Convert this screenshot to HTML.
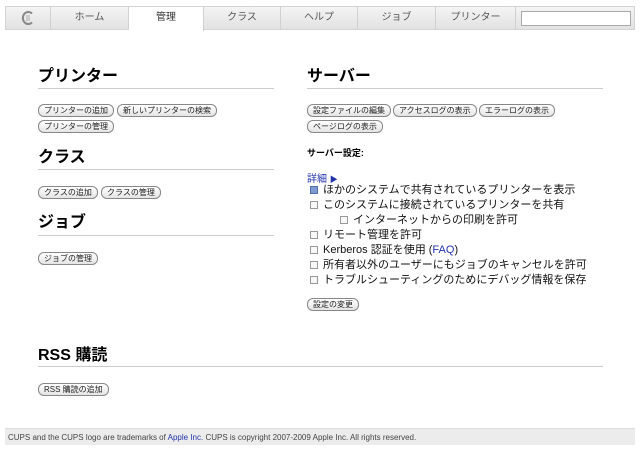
<!DOCTYPE html>
<html><head><meta charset="utf-8"><style>
*{margin:0;padding:0;box-sizing:border-box}
body{width:640px;height:451px;background:#fff;font-family:"Liberation Sans","Noto Sans CJK JP",sans-serif;position:relative;overflow:hidden;color:#000}
.nav{position:absolute;left:5px;top:6px;width:630px;height:24px;background:linear-gradient(#f4f4f4,#e2e2e2);border:1px solid #d4d4d4}
.tab{position:absolute;top:0;height:22px;border-right:1px solid #d0d0d0;font-size:10px;color:#555;text-align:center;line-height:22px}
.tab.on{background:#fff;color:#333;height:24px}
.srch{position:absolute;left:515px;top:4px;width:110px;height:15px;background:#fff;border:1px solid #aaa}
.abs{position:absolute}
h2{position:absolute;font-size:16px;font-weight:bold;line-height:18px}
.ln{position:absolute;height:1px;background:#ccc}
.b{position:absolute;height:13px;border:1px solid #888;border-radius:6px;background:linear-gradient(#fff,#e4e4e4);font-size:8px;line-height:11px;padding:0 5px;white-space:nowrap;color:#222}
.cb{position:absolute;font-size:11px;line-height:13px;white-space:nowrap;color:#111}
.cb i{display:inline-block;width:8px;height:8px;border:1px solid #999;background:#f8f8f8;margin-right:5px;vertical-align:-1px;position:relative}
.cb i.ck{background:#7f9ad0;border-color:#5570aa}
.foot{position:absolute;left:5px;top:428px;width:630px;height:17px;background:#ececec;border-top:1px solid #ddd;font-size:8px;color:#444;line-height:17px;padding-left:3px}
a{color:#2233aa;text-decoration:none}
</style></head><body>
<div class="nav">
<div class="tab" style="left:0;width:45px">
<svg width="14" height="16" viewBox="0 0 14 16" style="margin-top:3px"><path d="M11 3.5A5.5 6 0 1 0 11 12.5" fill="none" stroke="#888" stroke-width="2"/><path d="M5 6h4M5 8h4M5 10h4" stroke="#aaa" stroke-width="1"/></svg>
</div>
<div class="tab" style="left:45px;width:78px">ホーム</div>
<div class="tab on" style="left:123px;width:75px">管理</div>
<div class="tab" style="left:198px;width:77px">クラス</div>
<div class="tab" style="left:275px;width:77px">ヘルプ</div>
<div class="tab" style="left:352px;width:78px">ジョブ</div>
<div class="tab" style="left:430px;width:80px">プリンター</div>
<div class="srch"></div>
</div>

<h2 style="left:38px;top:68px">プリンター</h2><div class="ln" style="left:38px;top:88px;width:236px"></div>
<div class="b" style="left:38px;top:104px">プリンターの追加</div>
<div class="b" style="left:117px;top:104px">新しいプリンターの検索</div>
<div class="b" style="left:38px;top:120px">プリンターの管理</div>

<h2 style="left:38px;top:149px">クラス</h2><div class="ln" style="left:38px;top:169px;width:236px"></div>
<div class="b" style="left:38px;top:186px">クラスの追加</div>
<div class="b" style="left:101px;top:186px">クラスの管理</div>

<h2 style="left:38px;top:214px">ジョブ</h2><div class="ln" style="left:38px;top:235px;width:236px"></div>
<div class="b" style="left:38px;top:252px">ジョブの管理</div>

<h2 style="left:307px;top:68px">サーバー</h2><div class="ln" style="left:307px;top:88px;width:296px"></div>
<div class="b" style="left:307px;top:104px">設定ファイルの編集</div>
<div class="b" style="left:393px;top:104px">アクセスログの表示</div>
<div class="b" style="left:479px;top:104px">エラーログの表示</div>
<div class="b" style="left:307px;top:120px">ページログの表示</div>
<div class="abs" style="left:307px;top:146px;font-size:9px;font-weight:bold">サーバー設定:</div>
<div class="abs" style="left:307px;top:170px;font-size:10px;color:#2233aa">詳細 <span style="font-size:8px">▶</span></div>
<div class="cb" style="left:310px;top:184px"><i class="ck"></i>ほかのシステムで共有されているプリンターを表示</div>
<div class="cb" style="left:310px;top:199px"><i></i>このシステムに接続されているプリンターを共有</div>
<div class="cb" style="left:340px;top:214px"><i></i>インターネットからの印刷を許可</div>
<div class="cb" style="left:310px;top:229px"><i></i>リモート管理を許可</div>
<div class="cb" style="left:310px;top:244px"><i></i>Kerberos 認証を使用 (<a>FAQ</a>)</div>
<div class="cb" style="left:310px;top:259px"><i></i>所有者以外のユーザーにもジョブのキャンセルを許可</div>
<div class="cb" style="left:310px;top:274px"><i></i>トラブルシューティングのためにデバッグ情報を保存</div>
<div class="b" style="left:307px;top:298px">設定の変更</div>

<h2 style="left:38px;top:347px">RSS 購読</h2><div class="ln" style="left:38px;top:366px;width:565px"></div>
<div class="b" style="left:38px;top:383px">RSS 購読の追加</div>

<div class="foot">CUPS and the CUPS logo are trademarks of <a>Apple Inc.</a> CUPS is copyright 2007-2009 Apple Inc. All rights reserved.</div>
</body></html>
